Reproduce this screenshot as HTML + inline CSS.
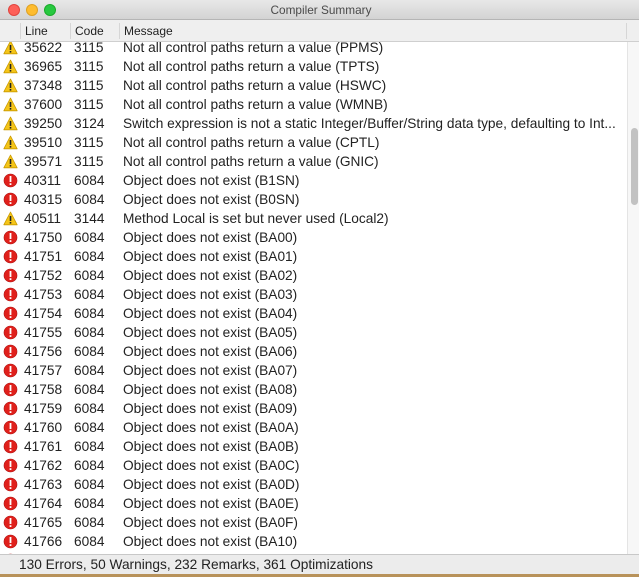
<!DOCTYPE html>
<html><head><style>
*{margin:0;padding:0;box-sizing:border-box}
body{width:639px;height:577px;overflow:hidden;background:#b8925a;font-family:"Liberation Sans",sans-serif;position:relative}
#win{position:absolute;left:0;top:0;width:639px;height:574px;background:#fff;overflow:hidden}
#title{position:absolute;left:0;top:0;width:639px;height:20px;background:linear-gradient(#e8e8e8,#d3d3d3);border-bottom:1px solid #b5b5b5;text-align:center;font-size:11.8px;line-height:21px;color:#4a4a4a;padding-left:3px}
.dot{position:absolute;top:4px;width:12px;height:12px;border-radius:50%}
#hdr{position:absolute;left:0;top:20px;width:639px;height:22px;background:#efefef;border-bottom:1px solid #cfcfcf;font-size:12px;color:#222;line-height:22px}
#hdr span{position:absolute;top:0}
.sep{position:absolute;top:3px;width:1px;height:16px;background:#d6d6d6}
#list{position:absolute;left:0;top:42px;width:627px;height:512px;overflow:hidden}
.row{position:relative;height:19px;font-size:13.7px;line-height:19px;color:#222;white-space:nowrap}
.row span{position:absolute;top:0}
.ic{position:absolute;left:3px;top:2px;width:15px;height:15px}
#sb{position:absolute;left:627px;top:42px;width:12px;height:512px;background:#f7f7f7;border-left:1px solid #e4e4e4}
#thumb{position:absolute;left:3px;top:86px;width:7px;height:77px;border-radius:4px;background:#c2c2c2}
#status{position:absolute;left:0;top:554px;width:639px;height:20px;background:#ececec;border-top:1px solid #c8c8c8;font-size:13.7px;line-height:20px;color:#222;padding-left:19px}
</style></head><body>
<div id="win">
<div id="title">Compiler Summary
<div class="dot" style="left:8px;background:#fd5f57;border:1px solid #e0443e"></div>
<div class="dot" style="left:26px;background:#febc2e;border:1px solid #dea123"></div>
<div class="dot" style="left:44px;background:#28c840;border:1px solid #1aab29"></div>
</div>
<div id="hdr"><div class="sep" style="left:20px"></div><span style="left:25px">Line</span><div class="sep" style="left:70px"></div><span style="left:75px">Code</span><div class="sep" style="left:119px"></div><span style="left:124px">Message</span><div class="sep" style="left:626px"></div></div>
<div id="list"><div style="margin-top:-4px">
</div></div>
<div id="sb"><div id="thumb"></div></div>
<div id="status">130 Errors, 50 Warnings, 232 Remarks, 361 Optimizations</div>
</div>
<script>
var W='<svg class="ic" viewBox="0 0 15 15"><path d="M7.5 1 L14.2 13.8 H0.8 Z" fill="#f5c518" stroke="#c99a00" stroke-width="0.8" stroke-linejoin="round"/><rect x="6.7" y="5" width="1.6" height="5" fill="#222"/><rect x="6.7" y="11" width="1.6" height="1.6" fill="#222"/></svg>';
var E='<svg class="ic" viewBox="0 0 15 15"><circle cx="7.5" cy="7.5" r="6.5" fill="#e0201b" stroke="#b01010" stroke-width="0.6"/><rect x="6.6" y="3" width="1.8" height="6" fill="#fff"/><rect x="6.6" y="10.2" width="1.8" height="1.8" fill="#fff"/></svg>';
var d=[["W","35622","3115","Not all control paths return a value (PPMS)"],["W","36965","3115","Not all control paths return a value (TPTS)"],["W","37348","3115","Not all control paths return a value (HSWC)"],["W","37600","3115","Not all control paths return a value (WMNB)"],["W","39250","3124","Switch expression is not a static Integer/Buffer/String data type, defaulting to Int..."],["W","39510","3115","Not all control paths return a value (CPTL)"],["W","39571","3115","Not all control paths return a value (GNIC)"],["E","40311","6084","Object does not exist (B1SN)"],["E","40315","6084","Object does not exist (B0SN)"],["W","40511","3144","Method Local is set but never used (Local2)"]];
var s=["BA00","BA01","BA02","BA03","BA04","BA05","BA06","BA07","BA08","BA09","BA0A","BA0B","BA0C","BA0D","BA0E","BA0F","BA10","BA11"];
for(var i=0;i<s.length;i++)d.push(["E",String(41750+i),"6084","Object does not exist ("+s[i]+")"]);
var h='';d.forEach(function(r){h+='<div class="row">'+(r[0]=="W"?W:E)+'<span style="left:24px">'+r[1]+'</span><span style="left:74px">'+r[2]+'</span><span style="left:123px">'+r[3]+'</span></div>';});
document.getElementById('list').firstElementChild.innerHTML=h;
</script>
</body></html>
